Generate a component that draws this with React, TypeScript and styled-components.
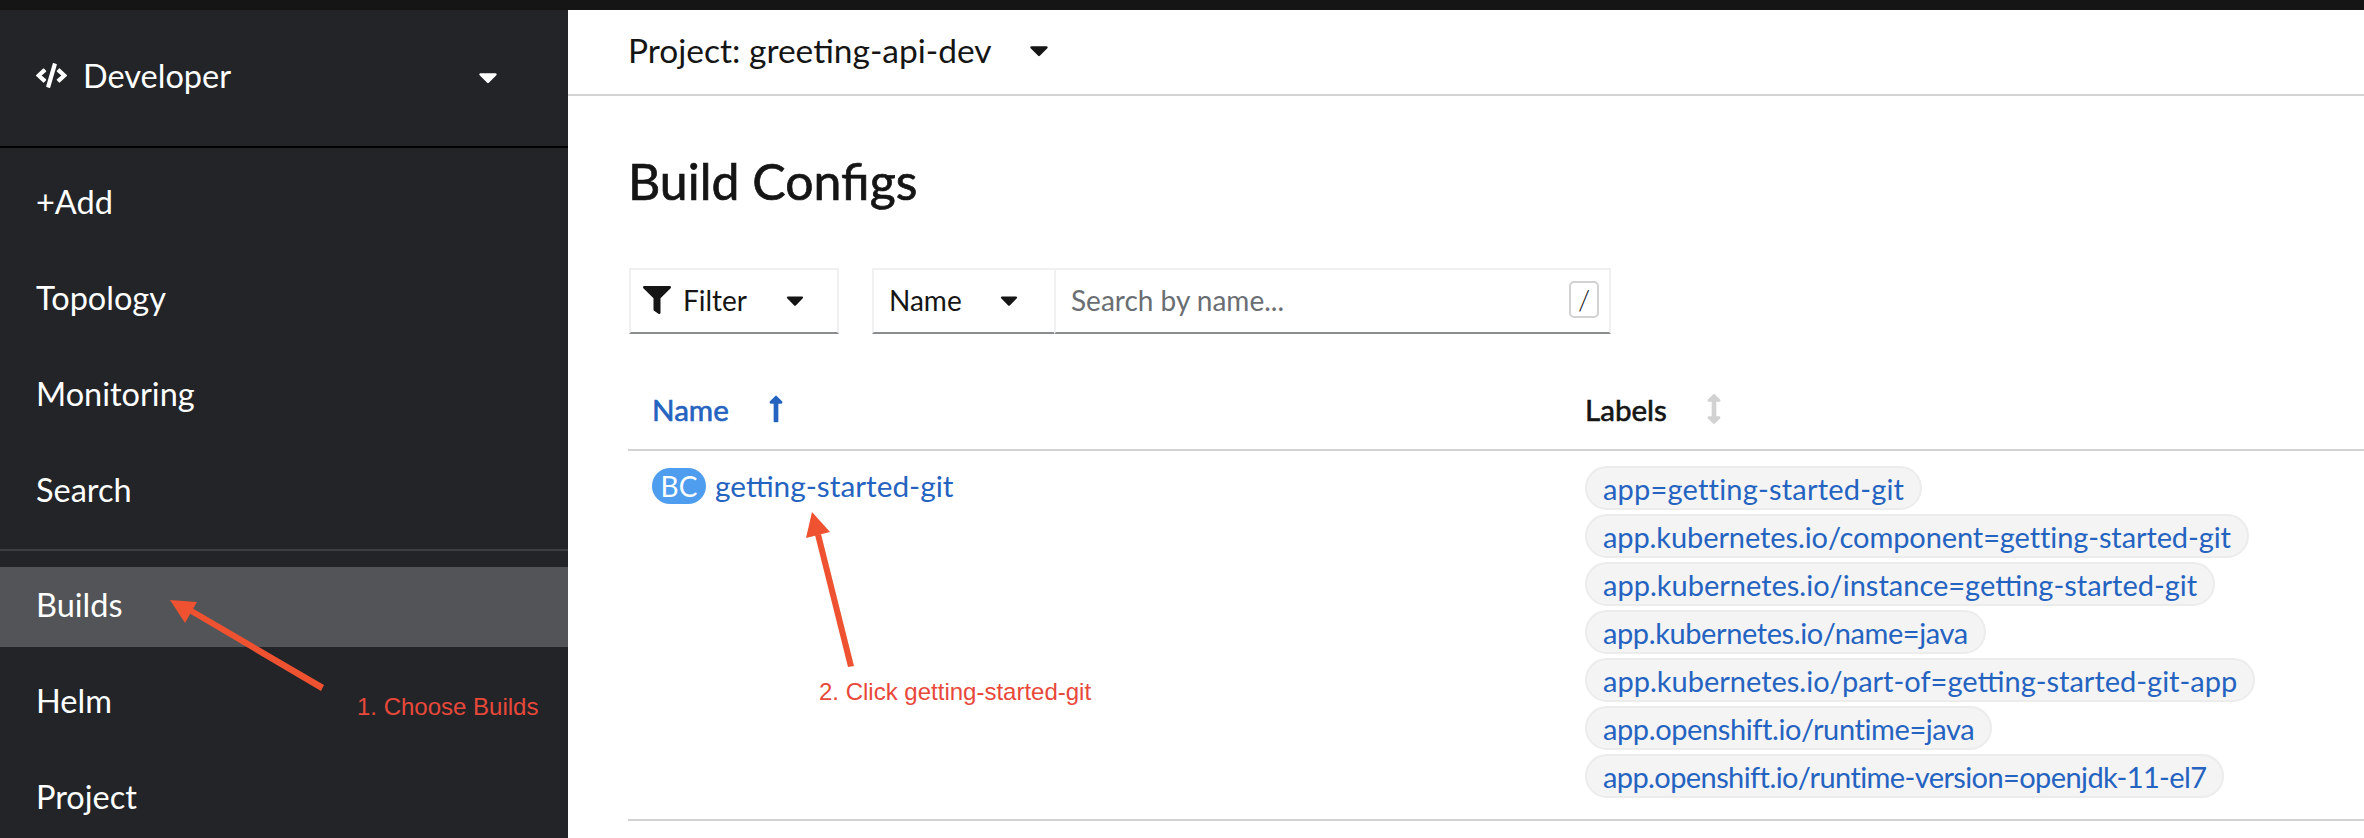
import * as React from 'react'
import styled, { createGlobalStyle } from 'styled-components'
import { FaCaretDown, FaCode, FaFilter, FaLongArrowAltUp, FaArrowsAltV } from 'react-icons/fa'

const GlobalStyle = createGlobalStyle`
  html, body {
    margin: 0;
    padding: 0;
    height: 838px;
    overflow: hidden;
    background: #fff;
    font-family: 'Lato', 'Noto Sans', sans-serif;
  }
`

const Page = styled.div`
  position: relative;
  width: 2364px;
  height: 838px;
  overflow: hidden;
  display: flex;
  flex-direction: column;
`

const TopStrip = styled.div`
  height: 10px;
  flex: none;
  background: #151515;
`

const Body = styled.div`
  flex: 1;
  min-height: 0;
  display: flex;
`

const Sidebar = styled.nav`
  width: 568px;
  flex: none;
  background: #222428;
  color: #fff;
  overflow: hidden;
`

const Switcher = styled.div`
  height: 138px;
  box-sizing: border-box;
  border-bottom: 2px solid #030303;
  padding: 0 65px 5px 36px;
  display: flex;
  align-items: center;
  font-size: 32.5px;
  svg:first-child {
    margin-right: 16px;
  }
  svg:last-child {
    margin-left: auto;
    margin-top: 3px;
  }
`

const NavGroup = styled.div<{ $divider?: boolean }>`
  display: flex;
  flex-direction: column;
  padding: ${p => (p.$divider ? '7px 0 10px' : '16px 0 0')};
  border-bottom: ${p => (p.$divider ? '2px solid #3c3f42' : 'none')};
`

const NavItem = styled.div<{ $active?: boolean }>`
  height: ${p => (p.$active ? '80px' : '96px')};
  margin-bottom: ${p => (p.$active ? '7px' : '0')};
  flex: none;
  box-sizing: border-box;
  padding: 0 36px ${p => (p.$active ? '5px' : '3px')};
  display: flex;
  align-items: center;
  font-size: 32.5px;
  background: ${p => (p.$active ? '#525457' : 'transparent')};
`

const Main = styled.main`
  flex: 1;
  min-width: 0;
  display: flex;
  flex-direction: column;
`

const ProjectBar = styled.div`
  height: 86px;
  flex: none;
  box-sizing: border-box;
  border-bottom: 2px solid #d2d2d2;
  padding: 0 0 4px 60px;
  display: flex;
  align-items: center;
  gap: 32px;
  font-size: 33.5px;
  color: #151515;
`

const Heading = styled.h1`
  margin: 55px 0 57px;
  padding-left: 60px;
  font-size: 50px;
  line-height: 60px;
  font-weight: 400;
  -webkit-text-stroke: 0.7px #151515;
  color: #151515;
`

const Toolbar = styled.div`
  display: flex;
  gap: 33px;
  padding-left: 61px;
  height: 66px;
  flex: none;
`

const FieldGroup = styled.div`
  display: flex;
`

const Field = styled.div<{ $width: number }>`
  width: ${p => p.$width}px;
  box-sizing: border-box;
  height: 66px;
  border: 2px solid #f0f0f0;
  border-bottom-color: #8a8d90;
  display: flex;
  align-items: center;
  font-size: 28px;
  color: #151515;
`

const FilterField = styled(Field)`
  padding: 0 28px 2px 12px;
  gap: 12px;
  svg:last-child {
    margin-left: auto;
  }
`

const NameField = styled(Field)`
  padding: 0 31px 2px 15px;
  border-right: none;
  svg:last-child {
    margin-left: auto;
  }
`

const SearchField = styled(Field)`
  padding: 0 10px 2px 15px;
  justify-content: space-between;
  color: #6a6e73;
`

const SlashKey = styled.span`
  width: 30px;
  height: 37px;
  box-sizing: border-box;
  border: 2px solid #d2d2d2;
  border-radius: 5px;
  margin-top: -2px;
  display: flex;
  align-items: center;
  justify-content: center;
  font-size: 28px;
  font-weight: 300;
  color: #151515;
`

const Table = styled.div`
  margin-left: 60px;
`

const TableHead = styled.div`
  height: 117px;
  box-sizing: border-box;
  border-bottom: 2px solid #d2d2d2;
  display: grid;
  grid-template-columns: 933px 1fr;
  align-items: center;
  padding-top: 35px;
`

const HeadCell = styled.div<{ $sorted?: boolean }>`
  display: flex;
  align-items: center;
  gap: 32px;
  padding-left: 24px;
  font-size: 29.6px;
  -webkit-text-stroke: 0.6px ${p => (p.$sorted ? '#2563c0' : '#151515')};
  color: ${p => (p.$sorted ? '#2563c0' : '#151515')};
`

const TableRow = styled.div`
  height: 370px;
  box-sizing: border-box;
  border-bottom: 2px solid #d2d2d2;
  display: grid;
  grid-template-columns: 933px 1fr;
  padding-top: 15px;
`

const NameCell = styled.div`
  padding: 2px 0 0 24px;
  display: flex;
  align-items: flex-start;
  gap: 9px;
`

const Badge = styled.span`
  width: 54px;
  height: 36px;
  flex: none;
  border-radius: 18px;
  background: #4f9dee;
  color: #fff;
  display: flex;
  align-items: center;
  justify-content: center;
  font-size: 28px;
`

const RowLink = styled.span`
  font-size: 29.8px;
  line-height: 36px;
  color: #2563c0;
`

const LabelList = styled.div`
  padding-left: 24px;
  display: flex;
  flex-direction: column;
  align-items: flex-start;
  gap: 4px;
`

const LabelPill = styled.span<{ $tracking: number }>`
  height: 44px;
  box-sizing: border-box;
  padding: 0 16px;
  border: 2px solid #ececec;
  border-radius: 22px;
  background: #f4f4f5;
  display: flex;
  align-items: center;
  font-size: 29px;
  letter-spacing: ${p => p.$tracking}px;
  color: #2563c0;
  white-space: nowrap;
`

const ArrowLayer = styled.svg`
  position: absolute;
  inset: 0;
  pointer-events: none;
`

const Callout = styled.span<{ $x: number; $y: number }>`
  position: absolute;
  left: ${p => p.$x}px;
  top: ${p => p.$y}px;
  font-family: 'Liberation Sans', Arial, sans-serif;
  font-size: 24px;
  line-height: 28px;
  color: #e8483a;
  white-space: nowrap;
`

const labels: [string, number][] = [
  ['app=getting-started-git', 0.2],
  ['app.kubernetes.io/component=getting-started-git', -0.1],
  ['app.kubernetes.io/instance=getting-started-git', 0],
  ['app.kubernetes.io/name=java', -0.4],
  ['app.kubernetes.io/part-of=getting-started-git-app', 0],
  ['app.openshift.io/runtime=java', -0.4],
  ['app.openshift.io/runtime-version=openjdk-11-el7', -0.6],
]

export default function App() {
  return (
    <Page>
      <GlobalStyle />
      <TopStrip />
      <Body>
        <Sidebar>
          <Switcher>
            <FaCode size={31} />
            Developer
            <FaCaretDown size={30} />
          </Switcher>
          <NavGroup $divider>
            <NavItem>+Add</NavItem>
            <NavItem>Topology</NavItem>
            <NavItem>Monitoring</NavItem>
            <NavItem>Search</NavItem>
          </NavGroup>
          <NavGroup>
            <NavItem $active>Builds</NavItem>
            <NavItem>Helm</NavItem>
            <NavItem>Project</NavItem>
          </NavGroup>
        </Sidebar>
        <Main>
          <ProjectBar>
            Project: greeting-api-dev
            <FaCaretDown size={30} />
          </ProjectBar>
          <Heading>Build Configs</Heading>
          <Toolbar>
            <FilterField $width={210}>
              <FaFilter size={28} />
              Filter
              <FaCaretDown size={28} />
            </FilterField>
            <FieldGroup>
              <NameField $width={182}>
                Name
                <FaCaretDown size={28} />
              </NameField>
              <SearchField $width={557}>
                Search by name...
                <SlashKey>/</SlashKey>
              </SearchField>
            </FieldGroup>
          </Toolbar>
          <Table>
            <TableHead>
              <HeadCell $sorted>
                Name
                <FaLongArrowAltUp size={30} />
              </HeadCell>
              <HeadCell>
                Labels
                <FaArrowsAltV size={30} color="#d2d2d2" style={{ strokeWidth: 0 }} />
              </HeadCell>
            </TableHead>
            <TableRow>
              <NameCell>
                <Badge>BC</Badge>
                <RowLink>getting-started-git</RowLink>
              </NameCell>
              <LabelList>
                {labels.map(([label, tracking]) => (
                  <LabelPill key={label} $tracking={tracking}>
                    {label}
                  </LabelPill>
                ))}
              </LabelList>
            </TableRow>
          </Table>
        </Main>
      </Body>
      <ArrowLayer width={2364} height={838}>
        <g fill="#ee5230" stroke="none">
          <polygon points="170,600 197,602 185,623" />
          <polygon points="189,613 192,608 324,685 321,691" />
          <polygon points="812,512 830,532 806,538" />
          <polygon points="815,535 821,534 854,666 848,667" />
        </g>
      </ArrowLayer>
      <Callout $x={357} $y={693}>1. Choose Builds</Callout>
      <Callout $x={819} $y={678}>2. Click getting-started-git</Callout>
    </Page>
  )
}
